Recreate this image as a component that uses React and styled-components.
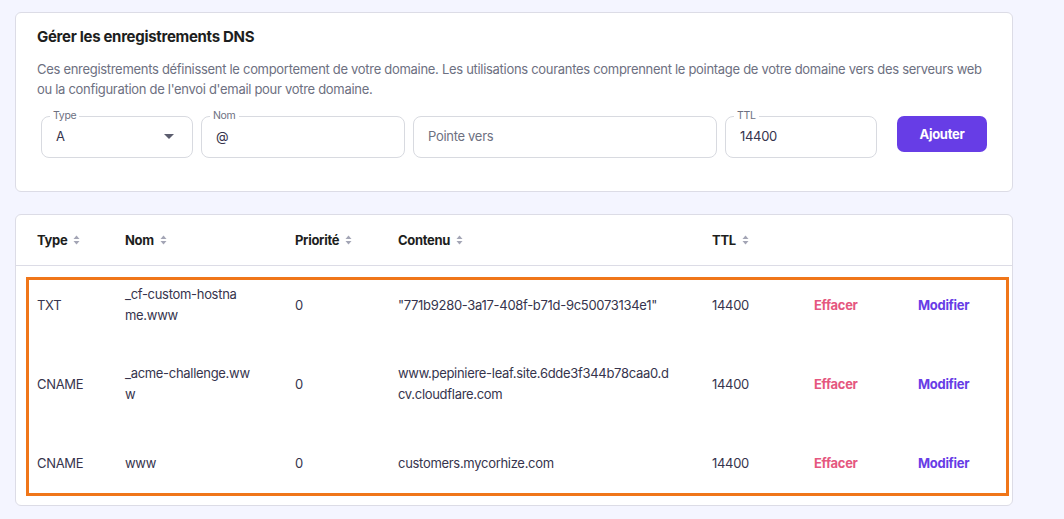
import React from "react";
import styled, { createGlobalStyle } from "styled-components";

const GlobalStyle = createGlobalStyle`
  html, body { margin: 0; padding: 0; }
  body {
    background: #f4f5ff;
    font-family: "Inter", "Noto Sans", sans-serif;
    letter-spacing: -0.3px;
    color: #36344d;
    -webkit-font-smoothing: antialiased;
  }
`;

const Page = styled.div`
  width: 1064px;
  padding: 12px 0 14px 15px;
  box-sizing: border-box;
  display: flex;
  flex-direction: column;
  gap: 22px;
`;

const Card = styled.section`
  position: relative;
  width: 998px;
  box-sizing: border-box;
  background: #fff;
  border: 1px solid #dcdce6;
  border-radius: 6px;
`;

const FormCard = styled(Card)`
  height: 180px;
  padding: 12px 21px 0 21px;
`;

const Title = styled.h2`
  margin: 0;
  font-size: 15px;
  line-height: 24px;
  font-weight: 700;
  color: #1d1e20;
`;

const Description = styled.p`
  margin: 10px 0 0 0;
  font-size: 13px;
  line-height: 20px;
  color: #6d7081;
`;

const FieldsRow = styled.div`
  display: flex;
  align-items: flex-start;
  gap: 8px;
  margin: 17px 0 0 4px;
`;

const Field = styled.div`
  position: relative;
  width: ${(p) => p.$w}px;
  height: 42px;
  box-sizing: border-box;
  border: 1px solid #d8dae0;
  border-radius: 8px;
  display: flex;
  align-items: center;
  justify-content: space-between;
  padding: 0 18px 2px 14px;
  font-size: 13px;
  color: ${(p) => (p.$placeholder ? "#6d7081" : "#36344d")};
`;

const FloatLabel = styled.span`
  position: absolute;
  top: -8px;
  left: 8px;
  padding: 0 3px;
  background: #fff;
  font-size: 10.5px;
  line-height: 14px;
  color: #6d7081;
`;

const Caret = styled.span`
  width: 0;
  height: 0;
  border-left: 5px solid transparent;
  border-right: 5px solid transparent;
  border-top: 5px solid #5b5d6e;
`;

const AddButton = styled.button`
  margin-left: 12px;
  width: 90px;
  height: 36px;
  border: none;
  border-radius: 7px;
  background: #673de6;
  color: #fff;
  font-family: inherit;
  letter-spacing: inherit;
  font-size: 13px;
  font-weight: 700;
  padding-bottom: 2px;
  cursor: pointer;
`;

const TableCard = styled(Card)`
  padding-bottom: 2px;
`;

const Row = styled.div`
  display: grid;
  grid-template-columns: 88px 170px 103px 314px 102px 104px 1fr;
  padding: 0 0 ${(p) => (p.$head ? 0 : 1)}px 21px;
  box-sizing: border-box;
  align-items: center;
  height: ${(p) => (p.$head ? 51 : 79)}px;
  border-bottom: ${(p) => (p.$head ? "1px solid #dcdce6" : "none")};
`;

const HeadCell = styled.div`
  display: flex;
  align-items: center;
  gap: 6px;
  font-size: 13px;
  font-weight: 700;
  color: #1d1e20;
`;

const Cell = styled.div`
  font-size: 13px;
  line-height: 21px;
  color: #36344d;
  max-width: ${(p) => (p.$max ? `${p.$max}px` : "none")};
  word-break: break-all;
`;

const Line = styled.span`
  display: block;
`;

const ActionLink = styled.a`
  font-size: 13px;
  font-weight: 700;
  color: ${(p) => (p.$danger ? "#e5577f" : "#673de6")};
  text-decoration: none;
  cursor: pointer;
`;

const Highlight = styled.div`
  position: absolute;
  left: 10px;
  top: 62px;
  width: 983px;
  height: 219px;
  box-sizing: border-box;
  border: 3px solid #f07619;
  pointer-events: none;
`;

const SortIcon = () => (
  <svg width="7" height="10" viewBox="0 0 7 10" aria-hidden="true">
    <path d="M3.5 0.5 L6.5 4 L0.5 4 Z" fill="#a3a5b5" />
    <path d="M3.5 9.5 L6.5 6 L0.5 6 Z" fill="#a3a5b5" />
  </svg>
);

const records = [
  { type: "TXT", name: ["_cf-custom-hostna", "me.www"], prio: "0", content: '"771b9280-3a17-408f-b71d-9c50073134e1"', ttl: "14400" },
  { type: "CNAME", name: ["_acme-challenge.ww", "w"], prio: "0", content: "www.pepiniere-leaf.site.6dde3f344b78caa0.dcv.cloudflare.com", ttl: "14400" },
  { type: "CNAME", name: ["www"], prio: "0", content: "customers.mycorhize.com", ttl: "14400" },
];

export default function App() {
  return (
    <>
      <GlobalStyle />
      <Page>
        <FormCard>
          <Title>Gérer les enregistrements DNS</Title>
          <Description>
            Ces enregistrements définissent le comportement de votre domaine. Les utilisations courantes comprennent le pointage de votre domaine vers des serveurs web ou la configuration de l'envoi d'email pour votre domaine.
          </Description>
          <FieldsRow>
            <Field $w={152}>
              <FloatLabel>Type</FloatLabel>
              A
              <Caret />
            </Field>
            <Field $w={204}>
              <FloatLabel>Nom</FloatLabel>
              @
            </Field>
            <Field $w={304} $placeholder>Pointe vers</Field>
            <Field $w={152}>
              <FloatLabel>TTL</FloatLabel>
              14400
            </Field>
            <AddButton>Ajouter</AddButton>
          </FieldsRow>
        </FormCard>

        <TableCard>
          <Row $head>
            <HeadCell>Type <SortIcon /></HeadCell>
            <HeadCell>Nom <SortIcon /></HeadCell>
            <HeadCell>Priorité <SortIcon /></HeadCell>
            <HeadCell>Contenu <SortIcon /></HeadCell>
            <HeadCell>TTL <SortIcon /></HeadCell>
            <HeadCell />
            <HeadCell />
          </Row>
          {records.map((r, i) => (
            <Row key={i}>
              <Cell>{r.type}</Cell>
              <Cell>
                {r.name.map((l) => (
                  <Line key={l}>{l}</Line>
                ))}
              </Cell>
              <Cell>{r.prio}</Cell>
              <Cell $max={273}>{r.content}</Cell>
              <Cell>{r.ttl}</Cell>
              <ActionLink $danger>Effacer</ActionLink>
              <ActionLink>Modifier</ActionLink>
            </Row>
          ))}
          <Highlight />
        </TableCard>
      </Page>
    </>
  );
}
